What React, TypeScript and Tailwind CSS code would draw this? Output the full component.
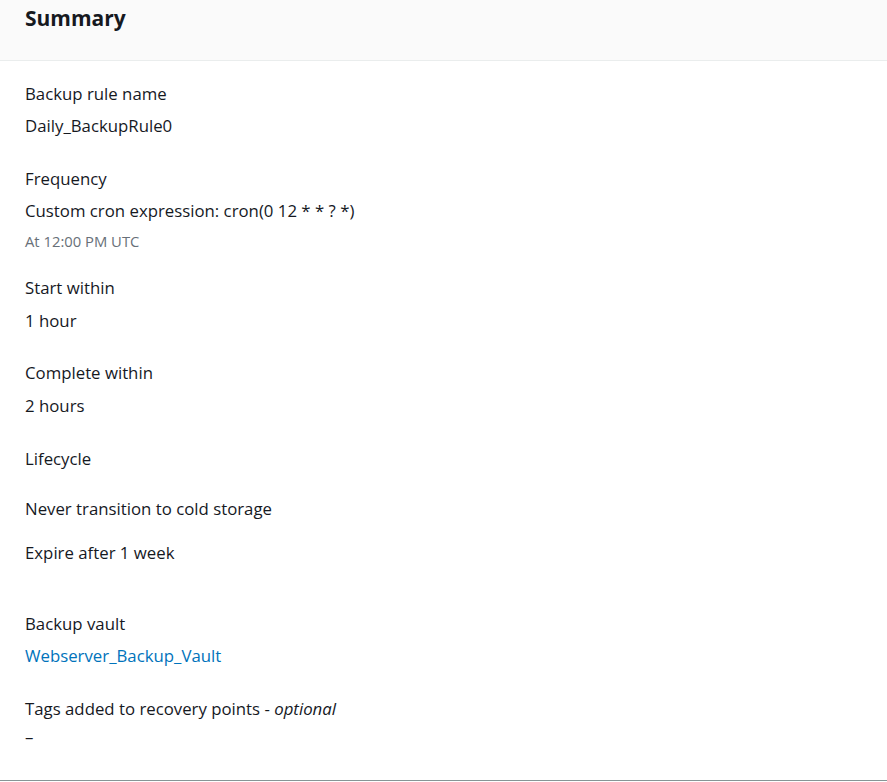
export default function App() {
  return (
    <div
      className="w-[887px] h-[782px] bg-white text-[#16191f]"
      style={{ fontFamily: '"Open Sans", "Liberation Sans", Arial, sans-serif' }}
    >
      <div className="h-[781px] border-b border-[#879596] flex flex-col">
        {/* header */}
        <div className="h-[61px] bg-[#fafafa] border-b border-[#eaeded] px-[25px] pt-[4px]">
          <h2 className="text-[21px] leading-[28px] font-bold">Summary</h2>
        </div>

        <div className="px-[25px] pt-[22px] text-[16.8px] leading-[22px]">
          <div>Backup rule name</div>
          <div className="mt-[10px]">Daily_BackupRule0</div>

          <div className="mt-[31px]">Frequency</div>
          <div className="mt-[10px]">Custom cron expression: cron(0 12 * * ? *)</div>
          <div className="mt-[9px] text-[14.8px] leading-[20px] text-[#687078]">At 12:00 PM UTC</div>

          <div className="mt-[26px]">Start within</div>
          <div className="mt-[11px]">1 hour</div>

          <div className="mt-[30px]">Complete within</div>
          <div className="mt-[11px]">2 hours</div>

          <div className="mt-[31px]">Lifecycle</div>
          <div className="mt-[28px]">Never transition to cold storage</div>
          <div className="mt-[22px]">Expire after 1 week</div>

          <div className="mt-[49px]">Backup vault</div>
          <div className="mt-[10px]">
            <a className="text-[#0073bb]">Webserver_Backup_Vault</a>
          </div>

          <div className="mt-[31px]">
            Tags added to recovery points - <i>optional</i>
          </div>
          <div className="mt-[6px]">–</div>
        </div>
      </div>
    </div>
  );
}
